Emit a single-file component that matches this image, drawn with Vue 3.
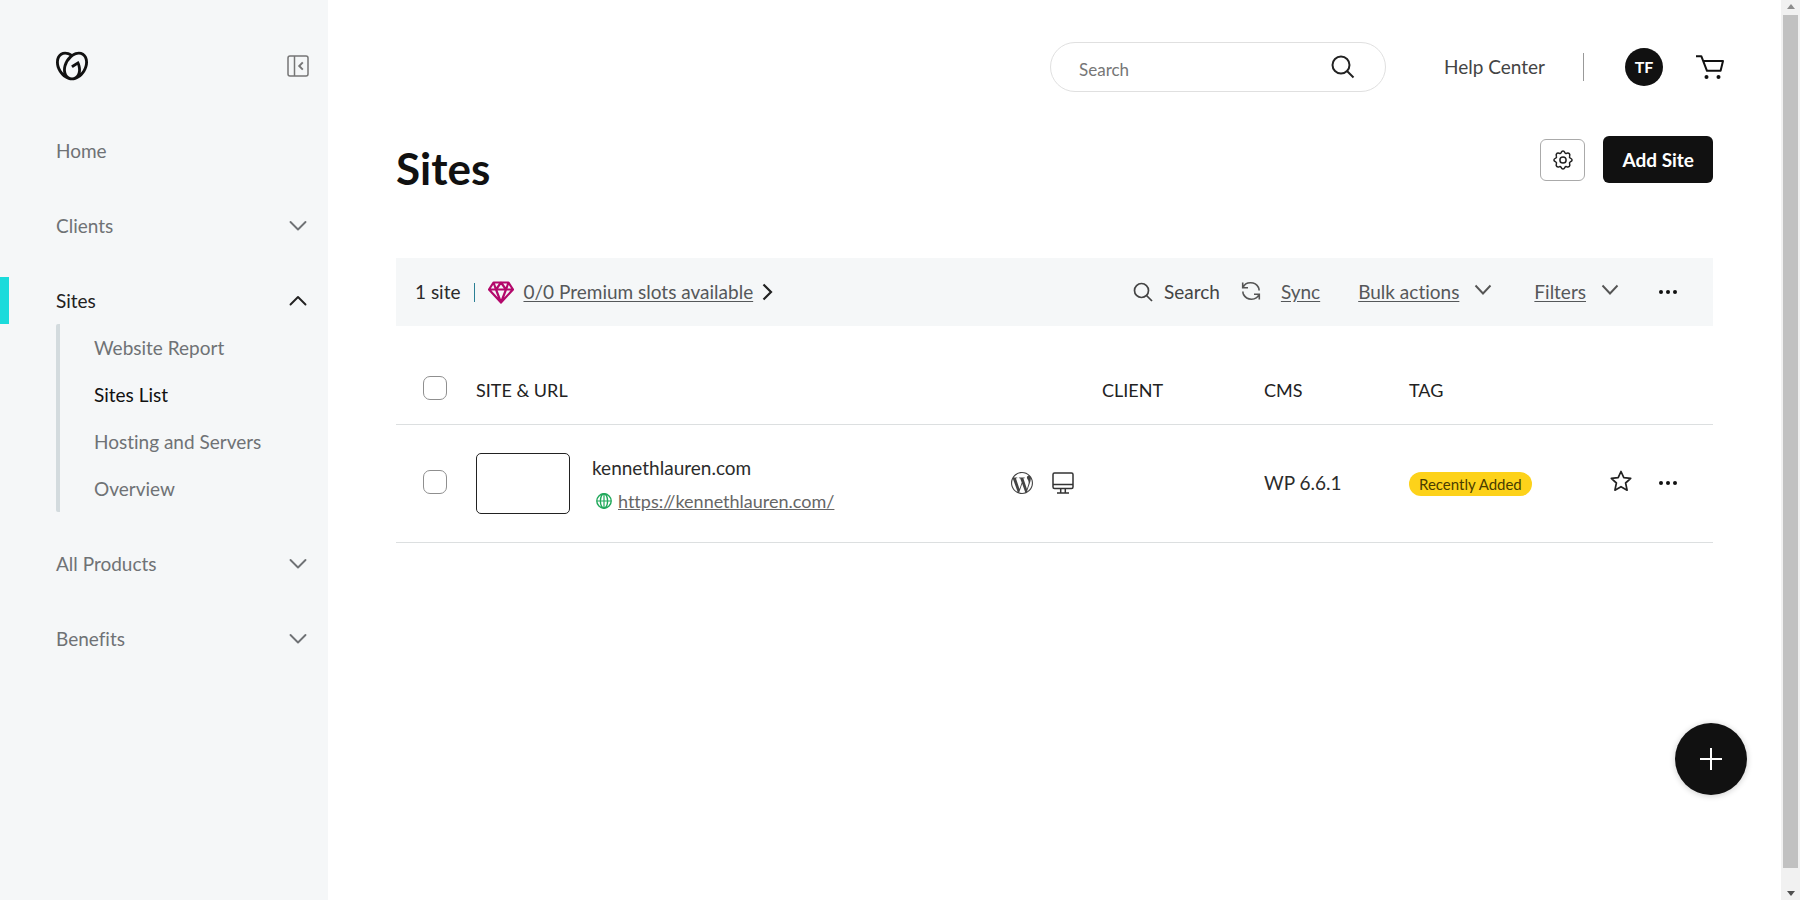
<script setup>
import { ref } from 'vue'

const nav = [
  { label: 'Home' },
  { label: 'Clients', menu: true },
  {
    label: 'Sites',
    menu: true,
    open: true,
    children: ['Website Report', 'Sites List', 'Hosting and Servers', 'Overview'],
  },
  { label: 'All Products', menu: true },
  { label: 'Benefits', menu: true },
]
const current = 'Sites List'
const sites = [
  { name: 'kennethlauren.com', url: 'https://kennethlauren.com/', client: '', cms: 'WP 6.6.1', tag: 'Recently Added' },
]
const query = ref('')
</script>

<template>
  <div class="app">
    <aside class="sidebar">
      <div class="brand">
        <a href="#" class="logo" aria-label="GoDaddy">
          <svg width="32" height="32" viewBox="0 0 24 24" fill="#111"><path d="M20.702 2.29c-2.494-1.554-5.778-1.187-8.706.654C9.076 1.104 5.79.736 3.3 2.29c-3.941 2.463-4.42 8.806-1.07 14.167 2.47 3.954 6.333 6.269 9.77 6.226 3.439.043 7.301-2.273 9.771-6.226 3.347-5.361 2.872-11.704-1.069-14.167zM4.042 15.328a12.838 12.838 0 01-1.546-3.541 10.12 10.12 0 01-.336-3.338c.15-1.98.956-3.524 2.27-4.345 1.315-.822 3.052-.87 4.903-.137.281.113.556.24.825.382A15.11 15.11 0 007.5 7.54c-2.035 3.255-2.655 6.878-1.945 9.765a13.247 13.247 0 01-1.514-1.98zm17.465-3.54a12.866 12.866 0 01-1.547 3.54 13.25 13.25 0 01-1.513 1.984c.635-2.589.203-5.76-1.353-8.734a.39.39 0 00-.563-.153l-4.852 3.032a.397.397 0 00-.126.546l.712 1.139a.395.395 0 00.547.126l3.145-1.965c.101.306.203.606.28.916.296 1.086.41 2.214.335 3.337-.15 1.982-.956 3.525-2.27 4.347a4.437 4.437 0 01-2.25.65h-.101a4.432 4.432 0 01-2.25-.65c-1.314-.822-2.121-2.365-2.27-4.347-.074-1.123.039-2.251.335-3.337a13.212 13.212 0 014.05-6.482 10.148 10.148 0 012.849-1.765c1.845-.733 3.586-.685 4.9.137 1.316.822 2.122 2.365 2.271 4.345a10.146 10.146 0 01-.33 3.334z" /></svg>
        </a>
        <button class="plain" aria-label="Collapse sidebar">
          <svg width="22" height="22" viewBox="0 0 22 22" fill="none" stroke="#767676" stroke-width="1.5"><rect x="1" y="1" width="20" height="20" rx="2" /><path d="M7.5 1v20" /><path d="M15.8 7.3 12.2 11l3.6 3.7" stroke-width="1.9" /></svg>
        </button>
      </div>
      <nav>
        <ul class="nav">
          <li v-for="item in nav" :key="item.label" :class="{ active: item.open }">
            <button v-if="item.menu" class="nav-item" :aria-expanded="!!item.open">
              {{ item.label }}
              <svg width="18" height="12" viewBox="0 0 18 12" fill="none" stroke="currentColor" stroke-width="1.9" stroke-linecap="round" stroke-linejoin="round"><path :d="item.open ? 'M1.5 9.5 9 2l7.5 7.5' : 'M1.5 2 9 9.5 16.5 2'" /></svg>
            </button>
            <a v-else href="#" class="nav-item">{{ item.label }}</a>
            <ul v-if="item.children" class="sub">
              <li v-for="c in item.children" :key="c">
                <a href="#" :class="{ current: c === current }">{{ c }}</a>
              </li>
            </ul>
          </li>
        </ul>
      </nav>
    </aside>

    <main class="main">
      <header class="topbar">
        <label class="search">
          <input v-model="query" type="text" placeholder="Search" aria-label="Search" />
          <svg width="24" height="24" viewBox="0 0 24 24" fill="none" stroke="#222" stroke-width="2"><circle cx="10" cy="10" r="8.5" /><path d="m16 16 6.5 6.5" /></svg>
        </label>
        <a href="#" class="help">Help Center</a>
        <span class="rule"></span>
        <button class="avatar">TF</button>
        <a href="#" class="cart" aria-label="Cart">
          <svg width="30" height="26" viewBox="0 0 30 26"><path d="M1 2.2h5.3L12 16.8h13.6L28 7H8" fill="none" stroke="#111" stroke-width="2" stroke-linejoin="round" /><circle cx="11.5" cy="23" r="2" fill="#111" /><circle cx="23.5" cy="23" r="2" fill="#111" /></svg>
        </a>
      </header>

      <div class="heading">
        <h1>Sites</h1>
        <div class="actions">
          <button class="gear" aria-label="Settings">
            <svg width="20" height="20" viewBox="0 0 20 20" fill="none" stroke="#222" stroke-width="1.5" stroke-linejoin="round"><circle cx="10" cy="10" r="3.1" /><path d="M10 .9c1 0 1.5.8 1.9 1.7.4.8 1 1 1.800.7.9-.4 1.800-.5 2.600.3.7.7.6 1.700.3 2.600-.3.8-.1 1.500.7 1.900.9.4 1.800.9 1.800 1.900s-.9 1.500-1.800 1.900c-.8.4-1 1.100-.7 1.900.3.9.4 1.900-.3 2.600-.8.7-1.700.6-2.600.3-.8-.3-1.400-.1-1.800.7-.4.9-.9 1.700-1.900 1.700s-1.500-.8-1.900-1.700c-.4-.8-1-1-1.800-.7-.9.3-1.900.4-2.600-.3-.7-.7-.6-1.700-.3-2.600.3-.8.1-1.500-.7-1.900C1.800 11.500.9 11 .9 10s.9-1.500 1.800-1.900c.8-.4 1-1.100.7-1.900-.3-.9-.4-1.900.3-2.600.7-.8 1.700-.7 2.600-.3.8.3 1.400.1 1.800-.7C8.500 1.700 9 .9 10 .9z" /></svg>
          </button>
          <button class="add">Add Site</button>
        </div>
      </div>

      <div class="toolbar">
        <span>1 site</span>
        <span class="pipe"></span>
        <a href="#" class="slots">
          <svg width="26" height="23" viewBox="0 0 26 23" fill="none" stroke="#b3086b" stroke-width="2.2" stroke-linejoin="round"><path d="M5.5 1.5h15L25 8.5l-12 13L1 8.500zM1 8.500h24M8 8.500l5 13 5-13M5.500 1.500 8 8.500l5-7 5 7 2.500-7" /></svg>
          <span class="linked">0/0 Premium slots available</span>
          <svg width="11" height="18" viewBox="0 0 11 18" fill="none" stroke="#222" stroke-width="2.2"><path d="m1.500 1.500 7.500 7.500-7.500 7.500" /></svg>
        </a>
        <div class="tools">
          <button class="tool find">
            <svg width="20" height="20" viewBox="0 0 20 20" fill="none" stroke="#444" stroke-width="1.7"><circle cx="8.5" cy="8.5" r="7" /><path d="m13.500 13.500 5.500 5.500" /></svg>
            Search
          </button>
          <button class="tool sync">
            <svg width="20" height="22" viewBox="0 0 20 22" fill="none" stroke="#555" stroke-width="1.6"><path d="M1.700 1.500v5.300h5.300M2 6.500C4.500.5 14 0 17.500 6.500q.6 1.400.6 3M18.300 18.500v-5.300H13M18 13.500C15.500 19.500 6 20 2.500 13.500q-.6-1.400-.6-3" /></svg>
            <span class="linked">Sync</span>
          </button>
          <button class="tool menu bulk">
            <span class="linked">Bulk actions</span>
            <svg width="18" height="16" viewBox="0 0 18 16" fill="none" stroke="#555" stroke-width="1.9"><path d="m1.500 1.500 7.500 8 7.500-8" /></svg>
          </button>
          <button class="tool menu filters">
            <span class="linked">Filters</span>
            <svg width="18" height="16" viewBox="0 0 18 16" fill="none" stroke="#555" stroke-width="1.9"><path d="m1.500 1.500 7.500 8 7.500-8" /></svg>
          </button>
          <button class="tool" aria-label="More">
            <svg width="18" height="4" viewBox="0 0 18 4" fill="#111"><circle cx="2" cy="2" r="2" /><circle cx="9" cy="2" r="2" /><circle cx="16" cy="2" r="2" /></svg>
          </button>
        </div>
      </div>

      <table>
        <colgroup>
          <col class="c-check" /><col /><col class="c-icons" /><col class="c-client" /><col class="c-cms" /><col class="c-tag" /><col class="c-act" />
        </colgroup>
        <thead>
          <tr>
            <th class="check"><input type="checkbox" aria-label="Select all sites" /></th>
            <th>SITE &amp; URL</th>
            <th></th>
            <th>CLIENT</th>
            <th>CMS</th>
            <th>TAG</th>
            <th></th>
          </tr>
        </thead>
        <tbody>
          <tr v-for="s in sites" :key="s.url">
            <td class="check"><input type="checkbox" :aria-label="'Select ' + s.name" /></td>
            <td>
              <div class="site">
                <span class="thumb"></span>
                <div class="names">
                  <span>{{ s.name }}</span>
                  <span class="url">
                    <svg width="16" height="16" viewBox="0 0 16 16" fill="none" stroke="#1fa85a" stroke-width="1.4"><circle cx="8" cy="8" r="7.2" /><ellipse cx="8" cy="8" rx="3.6" ry="7.2" /><path d="M1 8h14M8 1v14" stroke-width="1.2" /></svg>
                    <a href="#">{{ s.url }}</a>
                  </span>
                </div>
              </div>
            </td>
            <td>
              <div class="icons">
                <svg width="22" height="22" viewBox="0 0 24 24" fill="#444"><path d="M21.469 6.825c.84 1.537 1.318 3.3 1.318 5.175 0 3.979-2.156 7.456-5.363 9.325l3.295-9.527c.615-1.54.82-2.771.82-3.864 0-.405-.026-.78-.07-1.11m-7.981.105c.647-.03 1.232-.105 1.232-.105.582-.075.514-.93-.067-.899 0 0-1.755.135-2.88.135-1.064 0-2.85-.15-2.85-.15-.585-.03-.661.855-.075.885 0 0 .54.061 1.125.09l1.68 4.605-2.37 7.08L5.354 6.9c.649-.03 1.234-.1 1.234-.1.585-.075.516-.93-.065-.896 0 0-1.746.138-2.874.138-.2 0-.438-.008-.69-.015C4.911 3.15 8.235 1.215 12 1.215c2.809 0 5.365 1.072 7.286 2.833-.046-.003-.091-.009-.141-.009-1.06 0-1.812.923-1.812 1.914 0 .89.513 1.643 1.06 2.531.411.72.89 1.643.89 2.977 0 .915-.354 1.994-.821 3.479l-1.075 3.585-3.9-11.61.001.014zM12 22.784c-1.059 0-2.081-.153-3.048-.437l3.237-9.406 3.315 9.087c.024.053.05.101.078.149-1.12.393-2.325.609-3.582.609M1.211 12c0-1.564.336-3.05.935-4.39L7.29 21.709C3.694 19.96 1.212 16.271 1.211 12M12 0C5.385 0 0 5.385 0 12s5.385 12 12 12 12-5.385 12-12S18.615 0 12 0" /></svg>
                <svg width="22" height="22" viewBox="0 0 22 22" fill="none" stroke="#333" stroke-width="1.5"><rect x="1" y="1" width="20" height="15.5" rx="1.5" /><path d="M1 12.500h20M8.700 16.500v4.500M13.300 16.500v4.500M5 21h12" /></svg>
              </div>
            </td>
            <td>{{ s.client }}</td>
            <td>{{ s.cms }}</td>
            <td><span class="tag">{{ s.tag }}</span></td>
            <td>
              <div class="row-actions">
                <button class="plain" aria-label="Favorite">
                  <svg width="22" height="26" viewBox="0 0 22 26" fill="none" stroke="#222" stroke-width="1.7" stroke-linejoin="round"><path d="m11 1.500 2.800 6.200 6.900.7-5.100 4.600 1.500 7.200-6.100-3.500-6.100 3.500L6.400 13 1.300 8.400l6.900-.7z" /></svg>
                </button>
                <button class="plain" aria-label="More actions">
                  <svg width="18" height="4" viewBox="0 0 18 4" fill="#111"><circle cx="2" cy="2" r="2" /><circle cx="9" cy="2" r="2" /><circle cx="16" cy="2" r="2" /></svg>
                </button>
              </div>
            </td>
          </tr>
        </tbody>
      </table>

      <button class="fab" aria-label="Add">
        <svg width="24" height="24" viewBox="0 0 24 24" fill="none" stroke="#fff" stroke-width="2"><path d="M12 1v22M1 12h22" /></svg>
      </button>
    </main>

    <div class="scrollbar" aria-hidden="true">
      <svg width="8" height="5" viewBox="0 0 8 5" fill="#8c8c8c"><path d="M0 5 4 0l4 5z" /></svg>
      <span class="handle"></span>
      <svg width="8" height="5" viewBox="0 0 8 5" fill="#505050"><path d="m0 0 4 5 4-5z" /></svg>
    </div>
  </div>
</template>

<style>
body {
  margin: 0;
}
</style>

<style scoped>
.app {
  display: flex;
  min-height: 100vh;
  background: #fff;
  color: #2b2b2b;
  font-family: Lato, "Liberation Sans", sans-serif;
  font-size: 19px;
  line-height: 24px;
  font-variant-ligatures: none;
}
* {
  box-sizing: border-box;
}
svg {
  display: block;
  flex: none;
}
button {
  font: inherit;
  color: inherit;
  background: none;
  border: 0;
  padding: 0;
  cursor: pointer;
}
a {
  color: inherit;
  text-decoration: none;
}
ul {
  list-style: none;
  margin: 0;
  padding: 0;
}

.sidebar {
  flex: none;
  width: 328px;
  padding: 50px 19px 28px 0;
  background: #f5f7f8;
  color: #6f7275;
}
.brand {
  display: flex;
  align-items: center;
  justify-content: space-between;
  height: 32px;
  margin-bottom: 45px;
  padding: 0 0 0 56px;
}
.nav {
  display: flex;
  flex-direction: column;
  gap: 28px;
}
.nav-item {
  display: flex;
  align-items: center;
  justify-content: space-between;
  width: 100%;
  height: 47px;
  padding: 0 2px 0 56px;
  text-align: left;
}
.active > .nav-item {
  padding-left: 47px;
  border-left: 9px solid #1bdbdb;
  color: #222;
}
.sub {
  margin-left: 56px;
  border-left: 4px solid #d3dbde;
  border-radius: 2px;
}
.sub a {
  display: block;
  padding: 12px 0 11px 34px;
}
.sub a.current {
  color: #111;
}

.main {
  flex: 1;
  min-width: 0;
  padding: 42px 68px 0 68px;
}
.topbar {
  display: flex;
  align-items: center;
  justify-content: flex-end;
  height: 50px;
  margin-right: -12px;
}
.search {
  display: flex;
  align-items: center;
  width: 336px;
  height: 50px;
  padding: 0 30px 0 28px;
  border: 1px solid #e0e0e0;
  border-radius: 25px;
}
.search input {
  flex: 1;
  min-width: 0;
  padding: 5px 0 0;
  border: 0;
  outline: 0;
  background: none;
  font: inherit;
  font-size: 17px;
}
.search input::placeholder {
  color: #767676;
  opacity: 1;
}
.help {
  margin-left: 58px;
  color: #444;
}
.rule {
  width: 1px;
  height: 28px;
  margin: 0 41px 0 38px;
  background: #999;
}
.avatar {
  width: 38px;
  height: 38px;
  border-radius: 50%;
  background: #111;
  color: #fff;
  font-size: 16px;
  font-weight: 700;
}
.cart {
  margin-left: 32px;
}

.heading {
  display: flex;
  align-items: flex-start;
  justify-content: space-between;
  height: 122px;
  margin-top: 44px;
}
h1 {
  margin: 4px 0 0;
  color: #111;
  font-size: 44px;
  line-height: 56px;
  font-weight: 700;
}
.actions {
  display: flex;
  align-items: center;
  gap: 18px;
}
.gear {
  display: grid;
  place-items: center;
  width: 45px;
  height: 42px;
  border: 1px solid #aaa;
  border-radius: 6px;
}
.add {
  height: 47px;
  padding: 0 19px;
  border-radius: 6px;
  background: #111;
  color: #fff;
  font-weight: 700;
}

.toolbar {
  display: flex;
  align-items: center;
  height: 68px;
  padding: 0 36px 0 19px;
  background: #f5f7f8;
}
.pipe {
  width: 1px;
  height: 19px;
  margin: 0 13px 0 14px;
  background: #2a7f95;
}
.slots {
  display: flex;
  align-items: center;
  gap: 9px;
}
.linked {
  color: #55585a;
  text-decoration: underline;
  text-underline-offset: 2px;
}
.tools {
  display: flex;
  align-items: center;
  margin-left: auto;
}
.tool {
  display: flex;
  align-items: center;
  color: #444;
}
.find {
  gap: 11px;
  margin-right: 21px;
}
.sync {
  gap: 20px;
  margin-right: 38px;
}
.menu {
  gap: 15px;
}
.bulk {
  margin-right: 42px;
}
.filters {
  margin-right: 40px;
}

table {
  width: 100%;
  border-collapse: collapse;
  table-layout: fixed;
}
.c-check {
  width: 80px;
}
.c-icons {
  width: 91px;
}
.c-client {
  width: 162px;
}
.c-cms {
  width: 145px;
}
.c-tag {
  width: 201px;
}
.c-act {
  width: 103px;
}
th,
td {
  padding: 0;
  border-bottom: 1px solid #dcdfe0;
  text-align: left;
  vertical-align: middle;
}
th {
  height: 98px;
  padding-top: 30px;
  color: #222;
  font-size: 18px;
  font-weight: 400;
}
td {
  height: 118px;
}
.check {
  padding-left: 27px;
}
.check input {
  display: block;
  appearance: none;
  width: 24px;
  height: 24px;
  margin: 0 0 3px;
  border: 1px solid #8f8f8f;
  border-radius: 7px;
  background: #fff;
}
.site {
  display: flex;
  align-items: center;
  gap: 22px;
}
.thumb {
  width: 94px;
  height: 61px;
  border: 1px solid #222;
  border-radius: 5px;
}
.names {
  display: flex;
  flex-direction: column;
  gap: 9px;
  padding-top: 2px;
}
.url {
  display: flex;
  align-items: center;
  gap: 6px;
  padding-left: 4px;
  font-size: 18px;
  color: #666;
}
.url a {
  text-decoration: underline;
}
.icons {
  display: flex;
  gap: 19px;
}
.tag {
  display: inline-block;
  padding: 0 10px;
  border-radius: 12px;
  background: #fdd21a;
  color: #4a3d00;
  font-size: 15px;
}
.row-actions {
  display: flex;
  align-items: center;
  gap: 27px;
}

.fab {
  position: fixed;
  right: 53px;
  bottom: 105px;
  display: grid;
  place-items: center;
  width: 72px;
  height: 72px;
  border-radius: 50%;
  background: #111;
  box-shadow: 0 1px 6px rgba(0, 0, 0, 0.2);
}

.scrollbar {
  position: sticky;
  top: 0;
  display: flex;
  flex: none;
  flex-direction: column;
  align-items: center;
  width: 19px;
  height: 100vh;
  padding: 4px 2px;
  background: #f1f1f1;
}
.handle {
  flex: 1;
  width: 100%;
  margin: 6px 0 23px;
  background: #c1c1c1;
}
</style>
